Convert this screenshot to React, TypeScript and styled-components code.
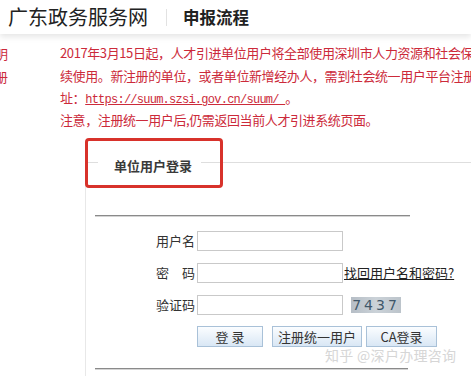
import styled, { createGlobalStyle } from 'styled-components';

const GlobalStyle = createGlobalStyle`
  body {
    margin: 0;
    background: #fff;
    font-family: "Noto Sans CJK SC", "Liberation Sans", sans-serif;
  }
`;

const CJK = `"Noto Sans CJK SC", "Liberation Sans", sans-serif`;

const Page = styled.div`
  position: relative;
  width: 471px;
  height: 376px;
  overflow: hidden;
  background: #fff;
`;

const Header = styled.div`
  height: 34px;
  display: flex;
  align-items: center;
  padding-left: 8px;
  background: #fff;
  box-shadow: 0 3px 6px rgba(0, 0, 0, 0.1);
  position: relative;
  z-index: 1;
`;

const SiteName = styled.div`
  font-size: 20px;
  line-height: 20px;
  color: #222;
  font-family: ${CJK};
`;

const Divider = styled.div`
  width: 1px;
  height: 17px;
  background: #e2e2e2;
  margin: 0 16px 0 18px;
`;

const PageName = styled.div`
  font-size: 16.5px;
  line-height: 20px;
  font-weight: bold;
  color: #222;
`;

const Body = styled.div`
  display: flex;
  padding-top: 8px;
`;

const LeftClip = styled.div`
  width: 8px;
  flex: none;
  overflow: hidden;
  color: #cc2a3a;
  font-size: 13px;
  line-height: 23px;
`;

const Fragment = styled.div`
  margin-left: -5px;
  white-space: nowrap;
`;

const Main = styled.div`
  margin-left: 52px;
  flex: 1;
  min-width: 0;
`;

const Notice = styled.div`
  color: #cc2a3a;
  font-size: 13px;
  letter-spacing: -0.4px;
`;

const NoticeLine = styled.div<{ $h: number }>`
  white-space: nowrap;
  height: ${p => p.$h}px;
  line-height: ${p => p.$h}px;
`;

const Url = styled.a`
  font-family: "Liberation Mono", monospace;
  font-size: 12px;
  letter-spacing: -0.75px;
  color: #cc2a3a;
  text-decoration: underline;
`;

const Panel = styled.div`
  position: relative;
  margin: 19px 0 0 25px;
  border-left: 1px solid #e8e8e8;
  padding-bottom: 20px;
`;

const LegendRow = styled.div`
  display: flex;
  align-items: center;
  height: 24px;
`;

const LegendRule = styled.div<{ $w?: number }>`
  border-top: 1px solid #dedede;
  ${p => (p.$w ? `width: ${p.$w}px;` : 'flex: 1;')}
`;

const LegendText = styled.div`
  font-size: 13px;
  line-height: 16px;
  font-weight: 600;
  color: #3a3a3a;
  padding: 8px 9px 0 16px;
`;

const Highlight = styled.div`
  position: absolute;
  left: -1px;
  top: -12px;
  width: 138px;
  height: 50px;
  box-sizing: border-box;
  border: 3px solid #d8322b;
  border-radius: 4px;
`;

const PanelBody = styled.div`
  padding-left: 9px;
`;

const DoubleRule = styled.div<{ $w: number; $top: number }>`
  width: ${p => p.$w}px;
  margin-top: ${p => p.$top}px;
  border-top: 1px solid #8a8a8a;
  border-bottom: 1px solid #d4d4d4;
`;

const Form = styled.div`
  display: grid;
  grid-template-columns: 100px 146px auto;
  column-gap: 2px;
  row-gap: 12px;
  align-items: center;
  margin-top: 14px;
  font-size: 13px;
  color: #333;
`;

const Label = styled.div`
  text-align: right;
  line-height: 20px;
  white-space: nowrap;
`;

const Input = styled.input`
  box-sizing: border-box;
  width: 146px;
  height: 20px;
  border: 1px solid #c9c9c9;
  background: #fff;
  padding: 0;
  outline: none;
`;

const Extra = styled.div`
  display: flex;
  align-items: center;
`;

const Link = styled.a`
  color: #222;
  text-decoration: underline;
  white-space: nowrap;
  font-size: 13px;
  line-height: 18px;
  margin-left: -1px;
`;

const Captcha = styled.div`
  margin-left: 6px;
  width: 50px;
  height: 16px;
  background: linear-gradient(90deg, #b6bec6, #cbd2d8 50%, #bcc4cb);
  color: #40576a;
  font-family: "DejaVu Sans", sans-serif;
  font-size: 14px;
  line-height: 16px;
  letter-spacing: 3px;
  text-align: center;
`;

const Buttons = styled.div`
  grid-column: 2 / 4;
  display: flex;
  margin-top: -1px;
`;

const Button = styled.button<{ $w: number; $gap: number }>`
  width: ${p => p.$w}px;
  margin-right: ${p => p.$gap}px;
  height: 21px;
  padding: 0;
  border: 1px solid #a9c1d8;
  background: linear-gradient(#fbfdff, #d9e7f5);
  color: #333;
  font-family: ${CJK};
  font-size: 13px;
  line-height: 19px;
  white-space: nowrap;
`;

const Watermark = styled.div`
  position: absolute;
  left: 325px;
  top: 345px;
  font-size: 14px;
  line-height: 20px;
  color: #d6d6d6;
  white-space: nowrap;
  letter-spacing: 0.3px;
`;

export default function App() {
  return (
    <Page>
      <GlobalStyle />
      <Header>
        <SiteName>广东政务服务网</SiteName>
        <Divider />
        <PageName>申报流程</PageName>
      </Header>
      <Body>
        <LeftClip>
          <Fragment>明</Fragment>
          <Fragment>册</Fragment>
        </LeftClip>
        <Main>
          <Notice>
            <NoticeLine $h={22}>2017年3月15日起，人才引进单位用户将全部使用深圳市人力资源和社会保障局</NoticeLine>
            <NoticeLine $h={23}>续使用。新注册的单位，或者单位新增经办人，需到社会统一用户平台注册</NoticeLine>
            <NoticeLine $h={22}>
              址：<Url href="#">https://suum.szsi.gov.cn/suum/ </Url> 。
            </NoticeLine>
            <NoticeLine $h={22}>注意，注册统一用户后,仍需返回当前人才引进系统页面。</NoticeLine>
          </Notice>
          <Panel>
            <LegendRow>
              <LegendRule $w={12} />
              <LegendText>单位用户登录</LegendText>
              <LegendRule />
            </LegendRow>
            <Highlight />
            <PanelBody>
              <DoubleRule $w={315} $top={41} />
              <Form>
                <Label>用户名</Label>
                <Input />
                <Extra />
                <Label>密　码</Label>
                <Input type="password" />
                <Extra>
                  <Link href="#">找回用户名和密码?</Link>
                </Extra>
                <Label>验证码</Label>
                <Input />
                <Extra>
                  <Captcha>7437</Captcha>
                </Extra>
                <Buttons>
                  <Button $w={66} $gap={9}>登 录</Button>
                  <Button $w={90} $gap={4}>注册统一用户</Button>
                  <Button $w={71} $gap={0}>CA登录</Button>
                </Buttons>
              </Form>
              <DoubleRule $w={313} $top={21} />
            </PanelBody>
          </Panel>
        </Main>
      </Body>
      <Watermark>知乎 @深户办理咨询</Watermark>
    </Page>
  );
}
